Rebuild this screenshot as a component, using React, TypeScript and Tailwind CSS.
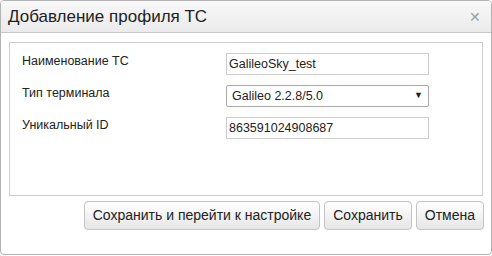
import React from "react";

export default function App() {
  const font = { fontFamily: '"Liberation Sans", Arial, sans-serif' };
  return (
    <div className="w-[492px] h-[256px] bg-white" style={font}>
      <div className="w-[492px] h-[255px] border border-[#b3b3b3] rounded-[4px] flex flex-col overflow-hidden">
        <div className="h-[32px] shrink-0 flex items-center justify-between border-b border-[#c8c8c8] bg-gradient-to-b from-[#f8f8f8] to-[#ebebeb] pl-[7px] pr-[10px]">
          <span className="text-[17px] text-[#222] leading-none">Добавление профиля ТС</span>
          <span className="text-[#a0a0a0] text-[14px] leading-none">✕</span>
        </div>
        <div className="ml-[8px] mt-[9px] w-[474px] h-[154px] border border-[#cccccc] px-[12px] pt-[10px] flex flex-col gap-[10px] text-[12.5px] text-[#222]">
          <div className="flex items-start h-[22px]">
            <span className="w-[204px] leading-[15px] mt-[1px]">Наименование ТС</span>
            <div className="w-[203px] h-[22px] border border-[#cccccc] flex items-center pl-[2px]">GalileoSky_test</div>
          </div>
          <div className="flex items-start h-[22px]">
            <span className="w-[204px] leading-[15px] mt-[1px]">Тип терминала</span>
            <div className="w-[203px] h-[22px] border border-[#a9a9a9] rounded-[2px] flex items-center justify-between pl-[5px] pr-[8px]">
              <span>Galileo 2.2.8/5.0</span>
              <span className="text-[9px] text-[#222] translate-x-[3px]">▼</span>
            </div>
          </div>
          <div className="flex items-start h-[22px]">
            <span className="w-[204px] leading-[15px] mt-[1px]">Уникальный ID</span>
            <div className="w-[203px] h-[22px] border border-[#cccccc] flex items-center pl-[2px]">863591024908687</div>
          </div>
        </div>
        <div className="flex justify-end gap-[4px] mt-[5px] pr-[7px]">
          <button className="h-[29px] px-[8px] rounded-[4px] border border-[#c4c4c4] bg-gradient-to-b from-[#ffffff] to-[#e6e6e6] text-[14px] text-[#222]">Сохранить и перейти к настройке</button>
          <button className="h-[29px] px-[8px] rounded-[4px] border border-[#c4c4c4] bg-gradient-to-b from-[#ffffff] to-[#e6e6e6] text-[14px] text-[#222]">Сохранить</button>
          <button className="h-[29px] px-[8px] rounded-[4px] border border-[#c4c4c4] bg-gradient-to-b from-[#ffffff] to-[#e6e6e6] text-[14px] text-[#222]">Отмена</button>
        </div>
      </div>
    </div>
  );
}
